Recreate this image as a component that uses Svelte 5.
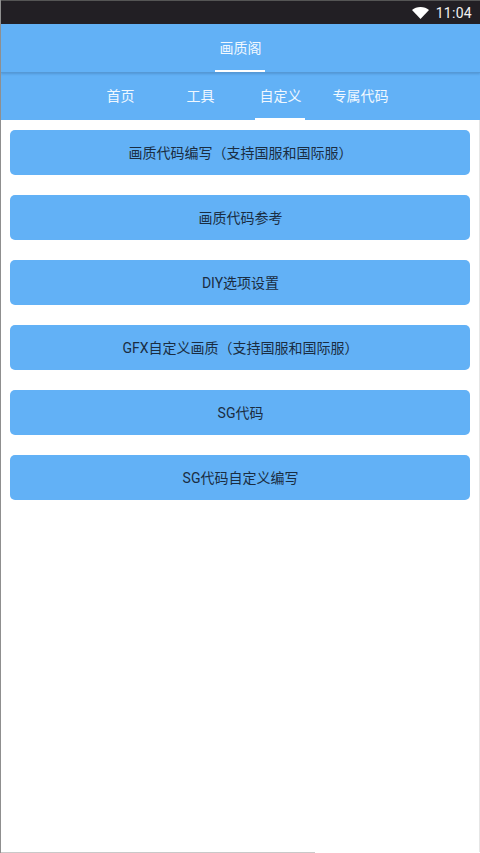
<script lang="ts">
  const tabs = ['首页', '工具', '自定义', '专属代码'];
  let activeTab = 2;

  const actions = [
    '画质代码编写（支持国服和国际服）',
    '画质代码参考',
    'DIY选项设置',
    'GFX自定义画质（支持国服和国际服）',
    'SG代码',
    'SG代码自定义编写',
  ];
</script>

<div class="page">
  <div class="status">
    <svg class="wifi" viewBox="0 0 17 12" width="17" height="12">
      <path d="M0 2.900C2.200 1 5.200 0 8.500 0s6.300 1 8.500 2.900L8.500 12z" fill="#fff" />
    </svg>
    <span class="time">11:04</span>
  </div>

  <header class="titlebar">
    <span class="title">画质阁</span>
    <span class="title-line"></span>
  </header>

  <nav class="tabs">
    {#each tabs as tab, i}
      <button class="tab" class:active={i === activeTab} on:click={() => (activeTab = i)}>
        <span>{tab}</span>
      </button>
    {/each}
  </nav>

  <main class="list">
    {#each actions as label}
      <button class="action">{label}</button>
    {/each}
  </main>
  <div class="edge"></div>
</div>

<style>
  :global(body) {
    background: #fff;
    font-family: Roboto, "Noto Sans CJK SC", sans-serif;
  }

  .page {
    height: 853px;
    box-sizing: border-box;
    display: flex;
    flex-direction: column;
    background: #fff;
    border-left: 1px solid #8f8f8f;
    overflow: hidden;
  }

  .status {
    height: 24px;
    flex: none;
    box-sizing: border-box;
    display: flex;
    align-items: center;
    justify-content: flex-end;
    gap: 7px;
    padding-right: 8px;
    background: #221f24;
    border-top: 1px solid #555;
  }

  .time {
    color: #f2f2f2;
    font-size: 14px;
    letter-spacing: 0.3px;
  }

  .titlebar {
    height: 49px;
    flex: none;
    display: flex;
    flex-direction: column;
    align-items: center;
    justify-content: flex-end;
    padding-right: 1px;
    background: #62b1f6;
    box-sizing: border-box;
    border-bottom: 1px solid #5599d6;
    box-shadow: 0 1px 2px rgba(50, 100, 150, 0.35);
    position: relative;
  }

  .title {
    color: #f0f8ff;
    font-size: 14px;
    line-height: 20px;
    margin-bottom: 12px;
    padding-left: 1px;
  }

  .title-line {
    width: 50px;
    height: 2px;
    background: #fff;
  }

  .tabs {
    height: 47px;
    flex: none;
    display: grid;
    grid-template-columns: repeat(4, 80px);
    padding-left: 79px;
    background: #62b1f6;
  }

  .tab {
    border: 0;
    padding: 0 0 3px 1px;
    background: none;
    color: #f0f8ff;
    font: inherit;
    font-size: 14px;
    cursor: pointer;
    display: flex;
    justify-content: center;
    align-items: center;
    position: relative;
  }

  .tab.active::after {
    content: '';
    position: absolute;
    left: 15px;
    right: 15px;
    bottom: 0;
    height: 2px;
    background: #fff;
  }

  .list {
    flex: 1;
    display: flex;
    flex-direction: column;
    gap: 20px;
    padding: 10px 9px 0;
    border-right: 1px solid #e6e6e6;
  }

  .action {
    height: 45px;
    flex: none;
    border: 0;
    padding: 0 0 2px 1px;
    border-radius: 5px;
    background: #62b1f6;
    color: #1a2d42;
    font: inherit;
    font-size: 14px;
    cursor: pointer;
  }

  .edge {
    width: 314px;
    height: 1px;
    flex: none;
    background: #c9c9c9;
  }
</style>
